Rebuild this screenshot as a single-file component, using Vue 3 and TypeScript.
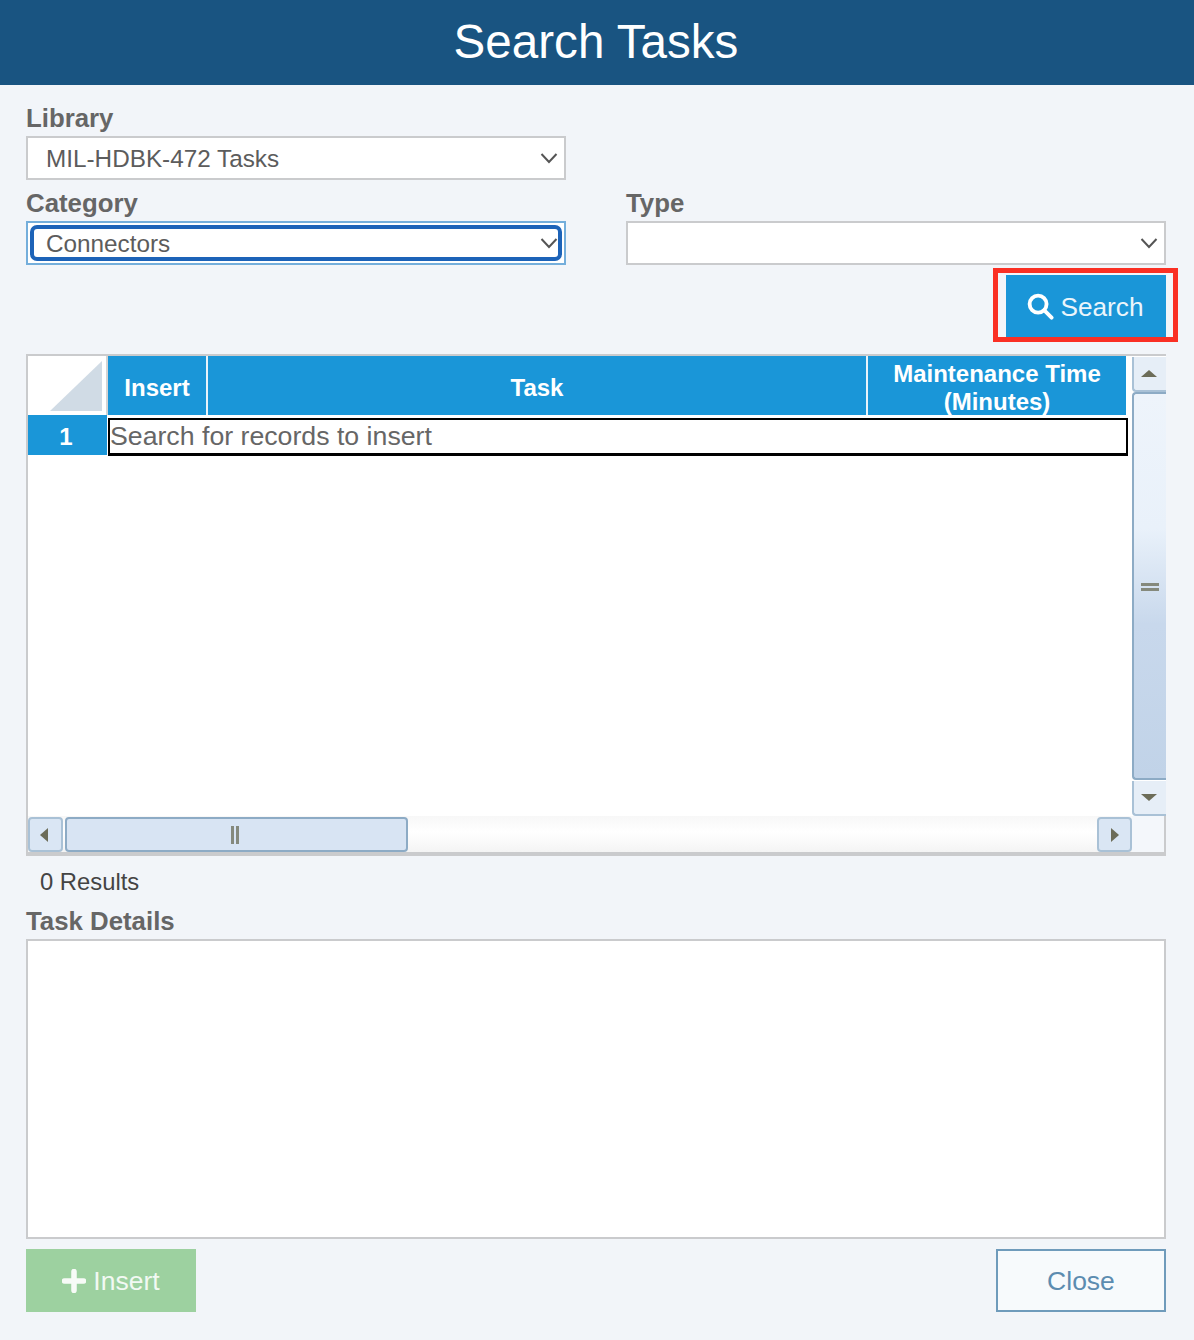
<script setup lang="ts">
const columns: { label: string[]; cls: string }[] = [
  { label: ['Insert'], cls: 'col-insert' },
  { label: ['Task'], cls: 'col-task' },
  { label: ['Maintenance Time', '(Minutes)'], cls: 'col-time' },
]
</script>

<template>
  <div class="page">
    <header class="title-bar">Search Tasks</header>

    <main class="content">
      <section class="field-row first">
        <div class="field">
          <label class="label">Library</label>
          <div class="select">
            <span>MIL-HDBK-472 Tasks</span>
            <svg class="chevron" viewBox="0 0 18 12"><path d="M1.5 2 L9 10 L16.5 2" /></svg>
          </div>
        </div>
      </section>

      <section class="field-row">
        <div class="field">
          <label class="label">Category</label>
          <div class="select focused">
            <div class="focus-ring"></div>
            <span>Connectors</span>
            <svg class="chevron" viewBox="0 0 18 12"><path d="M1.5 2 L9 10 L16.5 2" /></svg>
          </div>
        </div>
        <div class="field">
          <label class="label">Type</label>
          <div class="select">
            <span></span>
            <svg class="chevron" viewBox="0 0 18 12"><path d="M1.5 2 L9 10 L16.5 2" /></svg>
          </div>
        </div>
      </section>

      <div class="search-row">
        <button class="search-btn" type="button">
          <svg class="search-icon" viewBox="0 0 28 28">
            <circle cx="11.5" cy="11.5" r="8.8" />
            <path d="M18 18 L25.5 25.5" />
          </svg>
          <span>Search</span>
          <div class="callout"></div>
        </button>
      </div>

      <section class="data-grid">
        <div class="grid-main">
          <div class="grid-head">
            <div class="corner">
              <svg viewBox="0 0 52 50"><polygon points="0,50 52,0 52,50" /></svg>
            </div>
            <div v-for="c in columns" :key="c.cls" class="head-cell" :class="c.cls">
              <div v-for="l in c.label" :key="l">{{ l }}</div>
            </div>
          </div>
          <div class="grid-row">
            <div class="row-head">1</div>
            <div class="row-cell">Search for records to insert</div>
          </div>
        </div>

        <div class="vbar">
          <div class="vbtn up"><i class="tri tri-up"></i></div>
          <div class="vthumb"><i class="grip-h"></i></div>
          <div class="vbtn down"><i class="tri tri-down"></i></div>
        </div>

        <div class="hbar">
          <div class="hbtn prev"><i class="tri tri-left"></i></div>
          <div class="hthumb"><i class="grip-v"></i></div>
          <div class="htrack"></div>
          <div class="hbtn next"><i class="tri tri-right"></i></div>
        </div>
        <div class="scroll-corner"></div>
      </section>

      <div class="results">0 Results</div>

      <label class="label details-label">Task Details</label>
      <div class="details-box"></div>

      <footer class="footer">
        <button class="insert-btn" type="button">
          <svg class="plus" viewBox="0 0 24 24"><path d="M12 2.5 V21.5 M2.5 12 H21.5" /></svg>
          <span>Insert</span>
        </button>
        <button class="close-btn" type="button">Close</button>
      </footer>
    </main>
  </div>
</template>

<style>
html, body { margin: 0; background: #f2f5f9; }
</style>

<style scoped>
.page {
  width: 1194px;
  height: 1340px;
  background: #f2f5f9;
  font-family: "Liberation Sans", Arial, sans-serif;
  color: #666;
  box-sizing: border-box;
}
.title-bar {
  height: 85px;
  background: #195481;
  color: #fff;
  font-size: 47.6px;
  line-height: 84px;
  text-align: center;
  padding-right: 2px;
  box-sizing: border-box;
}
.content { padding: 0 28px 0 26px; width: 1140px; }
.field-row { display: flex; gap: 60px; }
.field-row.first { padding-top: 10px; }
.field { width: 540px; }
.label {
  display: block;
  height: 41px;
  line-height: 47px;
  font-size: 25.8px;
  font-weight: 700;
  color: #666;
}
.select {
  position: relative;
  height: 44px;
  box-sizing: border-box;
  border: 2px solid #cacbcd;
  background: #fff;
  padding-left: 18px;
  display: flex;
  align-items: center;
  justify-content: space-between;
  font-size: 24.3px;
  color: #5c5c5c;
}
.select.focused { border-color: #74aedb; }
.focus-ring {
  position: absolute;
  inset: 2px;
  border: 4px solid #1d63b8;
  border-radius: 7px;
}
.select > span { position: relative; top: 1px; }
.chevron {
  position: relative;
  width: 18px;
  height: 12px;
  margin-right: 6px;
  fill: none;
  stroke: #555;
  stroke-width: 2;
}
.search-row { display: flex; justify-content: flex-end; padding-top: 10px; }
.search-btn {
  position: relative;
  width: 160px;
  height: 62px;
  border: 0;
  padding: 2px 2px 0 0;
  background: #1a96d8;
  color: #eaf5fb;
  font: 400 26.2px "Liberation Sans", Arial, sans-serif;
  display: flex;
  align-items: center;
  justify-content: center;
  gap: 7px;
}
.search-icon {
  width: 27px;
  height: 27px;
  margin-top: -2px;
  fill: none;
  stroke: #fff;
  stroke-width: 4;
  stroke-linecap: round;
}
.callout {
  position: absolute;
  left: -13px;
  top: -7px;
  width: 185px;
  height: 74px;
  box-sizing: border-box;
  border: 5px solid #fa3024;
}
.data-grid {
  margin-top: 17px;
  height: 502px;
  box-sizing: border-box;
  border-top: 2px solid #cacbcd;
  border-left: 2px solid #cacbcd;
  border-bottom: 4px solid #cacbcd;
  display: grid;
  grid-template-columns: 1104px 34px;
  grid-template-rows: 460px 36px;
  background: #fff;
}
.grid-main { background: #fff; }
.grid-head { display: flex; height: 59px; padding-right: 6px; }
.corner {
  width: 80px;
  flex: none;
  position: relative;
  box-sizing: border-box;
  padding: 5px 4px 4px 22px;
  border-right: 2px solid #d4d4d4;
}
.corner svg { display: block; width: 52px; height: 50px; fill: #d0dbe5; }
.head-cell {
  background: #1a96d8;
  color: #fff;
  font-weight: 700;
  font-size: 24px;
  line-height: 28px;
  text-align: center;
  display: flex;
  flex-direction: column;
  justify-content: center;
  box-sizing: border-box;
  border-right: 2px solid #e8f3fa;
}
.col-insert { width: 100px; padding-top: 4px; }
.col-task { width: 660px; padding-top: 4px; }
.col-time { width: 258px; border-right: 0; padding-top: 5px; }
.grid-row { display: flex; height: 41px; }
.row-head {
  width: 79px;
  height: 40px;
  margin-right: 1px;
  box-sizing: border-box;
  padding-right: 3px;
  background: #1a96d8;
  color: #fff;
  font-weight: 700;
  font-size: 24px;
  line-height: 44px;
  text-align: center;
  flex: none;
}
.row-cell {
  margin-top: 3px;
  width: 1020px;
  height: 38px;
  box-sizing: border-box;
  border: 2px solid #000;
  border-bottom-width: 3px;
  background: #fff;
  font-size: 26.7px;
  line-height: 32px;
  color: #666;
  white-space: nowrap;
}
.vbar { display: flex; flex-direction: column; padding-top: 1px; }
.vbtn {
  height: 35px;
  flex: none;
  box-sizing: border-box;
  background: #e6eef7;
  border-left: 2px solid #a9c1d6;
  border-bottom: 2px solid #a9c1d6;
  border-radius: 0 0 0 4px;
  padding-right: 2px;
  display: flex;
  align-items: center;
  justify-content: center;
}
.vbtn.down { margin-top: 1px; }
.vthumb {
  flex: 1;
  box-sizing: border-box;
  border-left: 2px solid #8dabc5;
  border-top: 2px solid #8dabc5;
  border-bottom: 2px solid #8dabc5;
  border-radius: 4px 0 0 4px;
  background: linear-gradient(to bottom, #eef4fb 0%, #e9f1fa 35%, #c8d8ec 60%, #c1d3e8 100%);
  display: flex;
  align-items: center;
  justify-content: center;
}
.grip-h {
  display: block;
  width: 18px;
  height: 8px;
  box-sizing: border-box;
  border-top: 3px solid #85897c;
  border-bottom: 3px solid #85897c;
  position: relative;
  top: 1px;
}
.hbar {
  display: flex;
  align-items: stretch;
  background: linear-gradient(to bottom, #f7f7f7, #fff 45%, #f4f4f4);
  height: 36px;
}
.hbtn {
  width: 35px;
  flex: none;
  box-sizing: border-box;
  background: #dae6f4;
  border: 2px solid #a9c1d6;
  border-radius: 4px;
  display: flex;
  align-items: center;
  justify-content: center;
  height: 35px;
  margin-top: 1px;
}
.hbtn.prev { padding-right: 3px; }
.hthumb {
  width: 343px;
  margin-left: 2px;
  margin-top: 1px;
  box-sizing: border-box;
  background: #d8e4f3;
  border: 2px solid #8dabc5;
  border-radius: 4px;
  display: flex;
  align-items: center;
  justify-content: center;
  height: 35px;
}
.htrack { flex: 1; }
.grip-v {
  display: block;
  width: 8px;
  height: 18px;
  box-sizing: border-box;
  border-left: 3px solid #85897c;
  border-right: 3px solid #85897c;
  position: relative;
  left: -2px;
}
.scroll-corner {
  background: #f4f7fb;
  border-right: 2px solid #cacbcd;
}
.tri { display: block; width: 0; height: 0; border-style: solid; border-color: transparent; }
.tri-up { border-width: 0 8px 7px 8px; border-bottom-color: #6c6c58; }
.tri-down { border-width: 7px 8px 0 8px; border-top-color: #6c6c58; }
.tri-left { border-width: 7px 8px 7px 0; border-right-color: #6c6c58; }
.tri-right { border-width: 7px 0 7px 8px; border-left-color: #6c6c58; }
.results {
  height: 52px;
  line-height: 52px;
  padding-left: 14px;
  font-size: 23.8px;
  color: #444;
}
.details-label { height: 31px; line-height: 27px; }
.details-box {
  height: 300px;
  box-sizing: border-box;
  border: 2px solid #cacbcd;
  background: #fff;
}
.footer { display: flex; justify-content: space-between; padding-top: 10px; }
.insert-btn, .close-btn {
  width: 170px;
  height: 63px;
  box-sizing: border-box;
  font: 400 26.5px "Liberation Sans", Arial, sans-serif;
  display: flex;
  align-items: center;
  justify-content: center;
  padding: 2px 0 0;
}
.insert-btn {
  border: 0;
  background: #9dd1a0;
  color: #f2f9f3;
  gap: 7px;
}
.plus {
  width: 24px;
  height: 24px;
  margin-top: -2px;
  fill: none;
  stroke: #f7fbf7;
  stroke-width: 5.5;
  stroke-linecap: round;
}
.close-btn {
  border: 2px solid #6f9bbb;
  background: #f7fafc;
  color: #5c8cb0;
}
</style>
